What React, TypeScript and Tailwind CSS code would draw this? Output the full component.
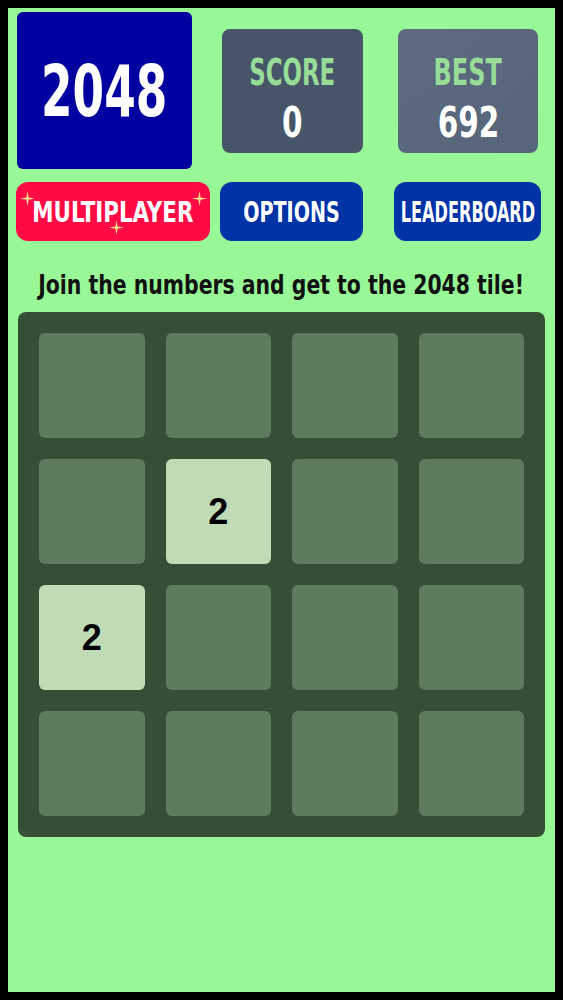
const board: number[][] = [
  [0, 0, 0, 0],
  [0, 2, 0, 0],
  [2, 0, 0, 0],
  [0, 0, 0, 0],
];

// the reference face is a narrow hand-drawn display font; DejaVu Condensed squeezed with scale-x stands in
const display = { fontFamily: '"DejaVu Sans Condensed", "DejaVu Sans", sans-serif' };

function Sparkle({ className }: { className: string }) {
  return (
    <svg viewBox="0 0 20 20" className={`absolute h-[15px] w-[15px] ${className}`}>
      <path d="M10 0 L11.5 8.5 L20 10 L11.5 11.5 L10 20 L8.5 11.5 L0 10 L8.5 8.5 Z" fill="#ffe08a" />
    </svg>
  );
}

export default function App() {
  return (
    <div className="min-h-[1000px] bg-black p-[8px]">
      <div className="flex h-[984px] flex-col bg-[#98f898] pl-[9px] pr-[10px]" style={display}>
        {/* Header */}
        <div className="mt-[4px] flex items-center">
          <div className="flex h-[157px] w-[175px] items-center justify-center rounded-[6px] bg-[#0000a0]">
            <span className="inline-block shrink-0 scale-x-[0.7] whitespace-nowrap text-[72px] font-bold leading-none text-white">
              2048
            </span>
          </div>
          <div className="ml-[30px] flex h-[124px] w-[141px] flex-col items-center rounded-[8px] bg-[#465568] pt-[24px]">
            <span className="inline-block scale-x-[0.67] text-[38px] font-bold leading-none text-[#98dc98]">SCORE</span>
            <span className="mt-[11px] inline-block scale-x-[0.78] text-[42px] font-bold leading-none text-white">0</span>
          </div>
          <div className="ml-[35px] flex h-[124px] w-[140px] flex-col items-center rounded-[8px] bg-gradient-to-br from-[#5c6b80] to-[#56657a] pt-[24px]">
            <span className="inline-block scale-x-[0.7] text-[38px] font-bold leading-none text-[#98dc98]">BEST</span>
            <span className="mt-[11px] inline-block scale-x-[0.78] text-[42px] font-bold leading-none text-white">692</span>
          </div>
        </div>

        {/* Buttons */}
        <div className="mt-[13px] flex items-center">
          <button className="relative -ml-[1px] flex h-[59px] w-[194px] items-center justify-center rounded-[12px] bg-[#ff0a45] pt-[3px] text-white">
            <span className="inline-block shrink-0 scale-x-[0.85] whitespace-nowrap text-[28px] font-bold leading-none">
              MULTIPLAYER
            </span>
            <Sparkle className="left-[4px] top-[9px]" />
            <Sparkle className="right-[3px] top-[9px]" />
            <Sparkle className="left-[93px] top-[38px]" />
          </button>
          <button className="ml-[10px] flex h-[59px] w-[143px] items-center justify-center rounded-[12px] bg-[#0033a5] pt-[3px] text-white">
            <span className="inline-block shrink-0 scale-x-[0.76] whitespace-nowrap text-[28px] font-bold leading-none">
              OPTIONS
            </span>
          </button>
          <button className="ml-[31px] flex h-[59px] w-[147px] items-center justify-center rounded-[12px] bg-[#0033a5] pt-[3px] text-white">
            <span className="inline-block shrink-0 scale-x-[0.64] whitespace-nowrap text-[28px] font-bold leading-none">
              LEADERBOARD
            </span>
          </button>
        </div>

        <div className="mt-[28px] flex justify-center">
          <p className="inline-block shrink-0 scale-x-[0.84] whitespace-nowrap text-[27px] font-bold leading-[32px] text-[#111]">
            Join the numbers and get to the 2048 tile!
          </p>
        </div>

        {/* Board */}
        <div className="ml-[1px] mt-[11px] grid w-[527px] grid-cols-4 gap-[21px] rounded-[8px] bg-[#344f33] p-[21px]">
          {board.flat().map((v, i) => (
            <div
              key={i}
              className={`flex h-[105px] items-center justify-center rounded-[6px] ${
                v ? "bg-[#c1dbb7]" : "bg-[#5e7b5e]"
              }`}
            >
              {v ? (
                <span className="font-['Liberation_Sans',sans-serif] text-[36px] font-bold text-black">{v}</span>
              ) : null}
            </div>
          ))}
        </div>
      </div>
    </div>
  );
}
